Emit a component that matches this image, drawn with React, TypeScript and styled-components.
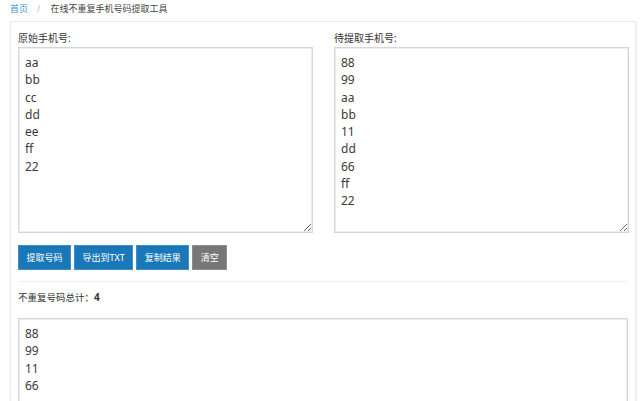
import styled, { createGlobalStyle } from "styled-components";

const GlobalStyle = createGlobalStyle`
  html, body {
    margin: 0;
    padding: 0;
    background: #fff;
    font-family: "Noto Sans", "Noto Sans CJK SC", sans-serif;
    color: #333;
  }
`;

////////// Data
const sourceText = ["aa", "bb", "cc", "dd", "ee", "ff", "22"].join("\n");
const targetText = ["88", "99", "aa", "bb", "11", "dd", "66", "ff", "22"].join("\n");
const resultText = ["88", "99", "11", "66"].join("\n");

const buttons = [
  { label: "提取号码", tone: "primary" },
  { label: "导出到TXT", tone: "primary" },
  { label: "复制结果", tone: "primary" },
  { label: "清空", tone: "muted" },
] as const;

const App = () => {
  return (
    <>
      <GlobalStyle />
      <Breadcrumb>
        <CrumbLink href="#">首页</CrumbLink>
        <CrumbSep>/</CrumbSep>
        <CrumbCurrent>在线不重复手机号码提取工具</CrumbCurrent>
      </Breadcrumb>
      <Panel>
        {/* 입력란 두 개 */}
        <Columns>
          <Field>
            <Label>原始手机号:</Label>
            <TextBox defaultValue={sourceText} spellCheck />
          </Field>
          <Field>
            <Label>待提取手机号:</Label>
            <TextBox defaultValue={targetText} />
          </Field>
        </Columns>
        {/* 버튼 */}
        <ButtonRow>
          {buttons.map((b) => (
            <ActionButton key={b.label} $tone={b.tone}>
              {b.label}
            </ActionButton>
          ))}
        </ButtonRow>
        <Divider />
        <Total>
          不重复号码总计：<strong>4</strong>
        </Total>
        <ResultBox defaultValue={resultText} />
      </Panel>
    </>
  );
};

export default App;

const Breadcrumb = styled.div`
  height: 21px;
  padding-left: 10px;
  display: flex;
  align-items: center;
  font-size: 9px;
  line-height: 18px;
  padding-bottom: 3px;
  box-sizing: border-box;
`;

const CrumbLink = styled.a`
  color: #3b8fd0;
  text-decoration: none;
`;

const CrumbSep = styled.span`
  color: #bbb;
  margin: 0 10px 0 9px;
`;

const CrumbCurrent = styled.span`
  color: #444;
`;

const Panel = styled.div`
  margin-left: 10px;
  width: 626px;
  height: 400px;
  box-sizing: border-box;
  padding: 8px 7px 0 7px;
  background: #fff;
  border: 1px solid #ebebeb;
  box-shadow: 1px 1px 3px rgba(0, 0, 0, 0.06);
`;

const Columns = styled.div`
  display: grid;
  grid-template-columns: 295px 295px;
  column-gap: 21px;
`;

const Field = styled.div`
  display: flex;
  flex-direction: column;
`;

const Label = styled.div`
  font-size: 10px;
  line-height: 16px;
  color: #333;
  margin-bottom: 1px;
`;

const TextBox = styled.textarea`
  box-sizing: border-box;
  width: 100%;
  height: 186px;
  margin: 0;
  padding: 6px 6px;
  border: 1px solid #d6d6d6;
  box-shadow: inset 0 0 0 1px #ededed;
  font-family: "Noto Sans", "Noto Sans CJK SC", sans-serif;
  font-size: 12px;
  line-height: 17.3px;
  color: #3a3a3a;
  resize: vertical;
  outline: none;
  display: block;
`;

const ResultBox = styled(TextBox)`
  height: 120px;
`;

const ButtonRow = styled.div`
  display: flex;
  gap: 3px;
  margin-top: 12px;
`;

type ActionButtonType = {
  $tone: "primary" | "muted";
};

const ActionButton = styled.button<ActionButtonType>`
  height: 25px;
  padding: 0 7.5px;
  border: 1px solid ${({ $tone }) => ($tone === "primary" ? "#3f8fc7" : "#8e8e8e")};
  background: ${({ $tone }) => ($tone === "primary" ? "#1a78b8" : "#777")};
  color: #fff;
  font-family: "Noto Sans", "Noto Sans CJK SC", sans-serif;
  font-size: 9px;
  cursor: pointer;
`;

const Divider = styled.hr`
  border: 0;
  border-top: 1px solid #eee;
  margin: 11px 0 0 0;
`;

const Total = styled.div`
  font-size: 9.5px;
  line-height: 16px;
  margin: 7px 0 12px 0;
  color: #333;

  strong {
    font-weight: 700;
    font-size: 10px;
  }
`;
